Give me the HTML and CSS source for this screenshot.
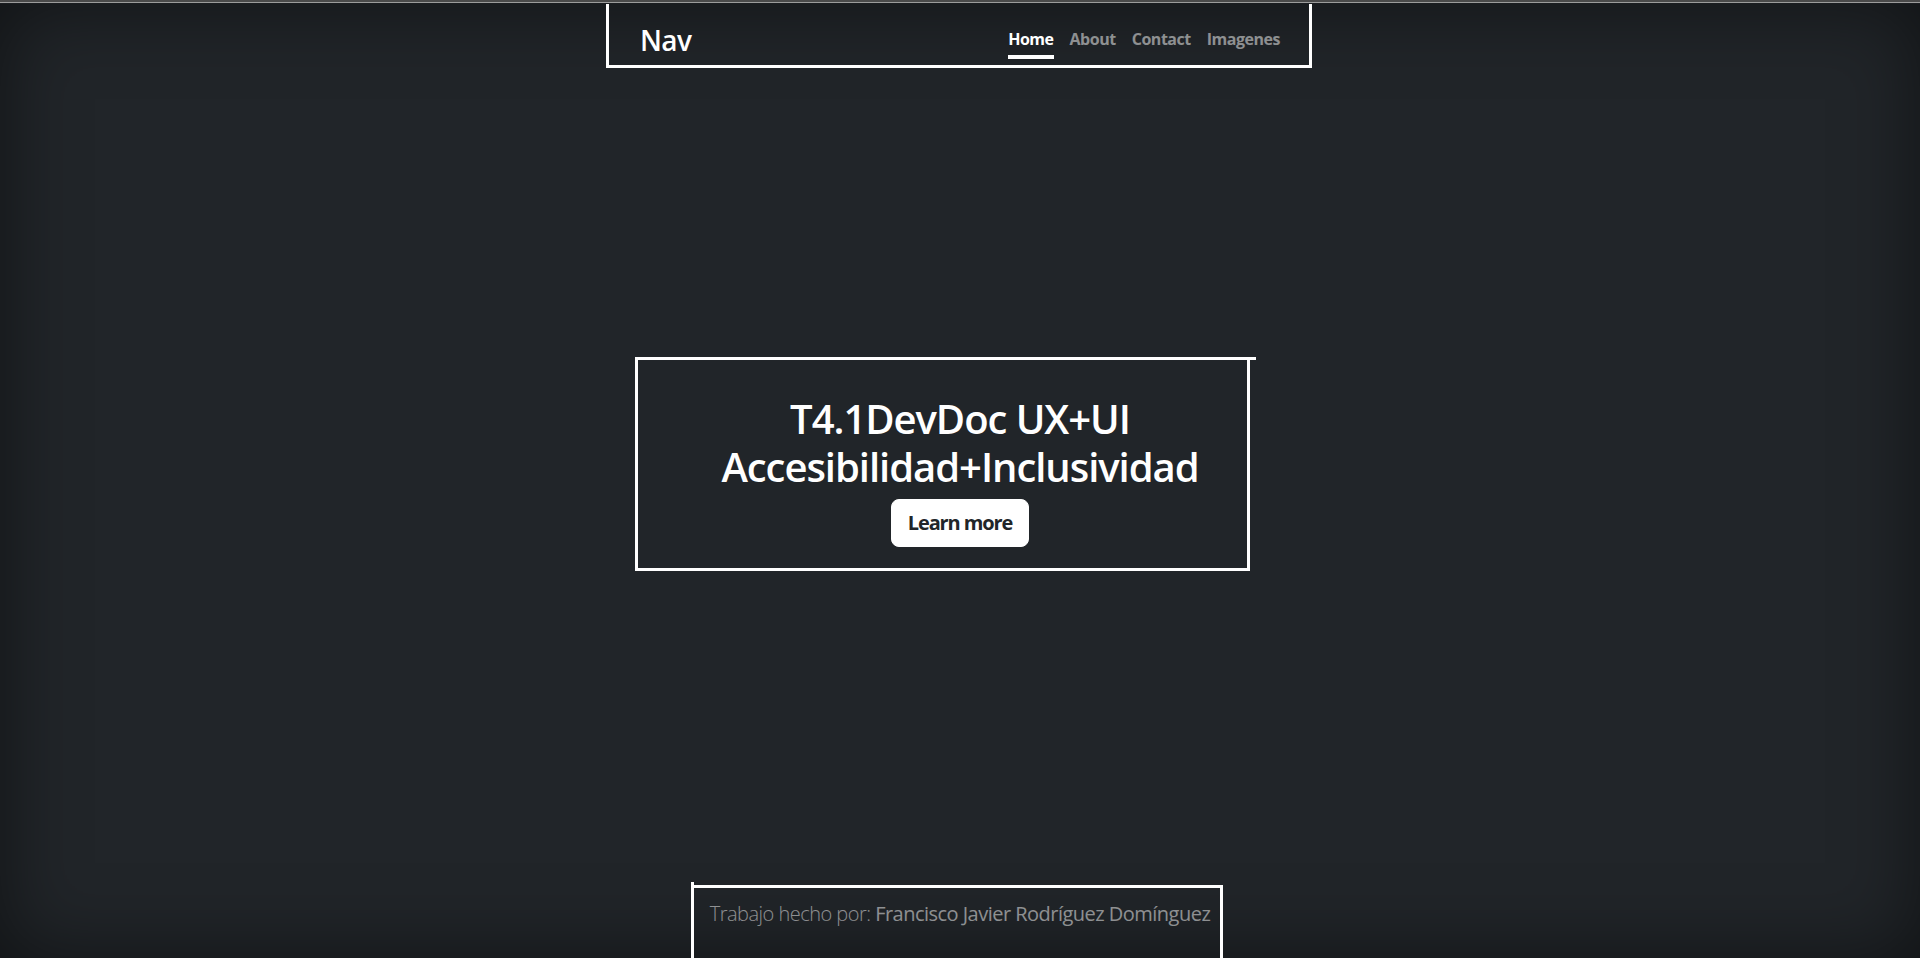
FILE: index.html
```html
<!DOCTYPE html>
<html lang="es">
<head>
<meta charset="utf-8">
<title>T4.1DevDoc UX+UI</title>
<link rel="stylesheet" href="styles.css">
</head>
<body>
  <div class="cover">
    <header class="masthead">
      <span class="mark mark-nav"></span>
      <h3 class="brand">Nav</h3>
      <nav class="nav">
        <a class="nav-link active" href="#">Home</a>
        <a class="nav-link" href="#">About</a>
        <a class="nav-link" href="#">Contact</a>
        <a class="nav-link" href="#">Imagenes</a>
      </nav>
    </header>

    <main class="hero">
      <span class="mark mark-hero"></span>
      <h1 class="hero-title">T4.1DevDoc UX+UI<br>Accesibilidad+Inclusividad</h1>
      <p class="lead"><a href="#" class="btn">Learn more</a></p>
    </main>

    <footer class="foot">
      <span class="mark mark-foot"></span>
      <p class="credit"><span class="credit-label">Trabajo hecho por:</span> <span class="credit-name">Francisco Javier Rodríguez Domínguez</span></p>
    </footer>
  </div>
</body>
</html>
```
FILE: styles.css
```css
html {
  margin: 0;
  height: 100%;
  background: linear-gradient(to bottom, #4a4a4a 0, #4a4a4a 2px, #9c9c9c 2px, #9c9c9c 3px, #1a1d20 3px, #1a1d20 4px, #ffffff 4px);
}

body {
  margin: 4px 0 0;
  height: calc(100vh - 8px);
  display: flex;
  background: #212529;
  box-shadow: inset 0 0 5rem rgba(0, 0, 0, 0.5);
  color: #fff;
  text-align: center;
  font-family: "Open Sans", "Noto Sans", "Liberation Sans", sans-serif;
  font-size: 16px;
  line-height: 1.5;
}

.cover {
  display: flex;
  flex-direction: column;
  width: 100%;
  max-width: 672px;
  height: 100%;
  margin: 0 auto;
  padding: 19px 16px 13px;
  box-sizing: border-box;
}

.mark {
  position: absolute;
  border: 3px solid #fff;
  pointer-events: none;
}

.masthead {
  position: relative;
  margin-bottom: auto;
  display: flex;
  justify-content: space-between;
  align-items: center;
}

.mark-nav {
  top: -19px;
  left: -34px;
  right: -32px;
  bottom: -9px;
  border-top: none;
}

.brand {
  margin: 0;
  font-size: 28px;
  font-weight: 600;
  line-height: 1.2;
  letter-spacing: -0.02em;
}

.nav {
  display: flex;
}

.nav-link {
  margin-left: 16px;
  padding: 4px 0;
  border-bottom: 4px solid transparent;
  color: rgba(255, 255, 255, 0.5);
  font-weight: 700;
  text-decoration: none;
  letter-spacing: -0.03em;
}

.nav-link.active {
  color: #fff;
  border-bottom-color: #fff;
}

.hero {
  position: relative;
  padding: 0 16px;
}

.mark-hero {
  top: -38px;
  left: -5px;
  right: 30px;
  bottom: -8px;
}

.mark-hero::before {
  content: "";
  position: absolute;
  top: -3px;
  right: -9px;
  width: 9px;
  height: 3px;
  background: #fff;
}

.hero-title {
  margin: 0 0 8px;
  font-size: 40px;
  font-weight: 600;
  line-height: 1.2;
  letter-spacing: -0.026em;
}

.lead {
  margin: 0 0 16px;
  font-size: 20px;
}

.btn {
  display: inline-block;
  padding: 8px 16px;
  border: 1px solid #fff;
  border-radius: 8px;
  background: #fff;
  color: #212529;
  font-weight: 700;
  line-height: 1.5;
  text-decoration: none;
  letter-spacing: -0.055em;
}

.foot {
  position: relative;
  margin-top: auto;
  color: rgba(255, 255, 255, 0.5);
}

.mark-foot {
  top: -14px;
  left: 51px;
  right: 57px;
  bottom: -24px;
  border-bottom: none;
}

.mark-foot::before {
  content: "";
  position: absolute;
  top: -6px;
  left: -3px;
  width: 3px;
  height: 3px;
  background: #fff;
}

.credit {
  margin: 0 0 16px;
  font-size: 20px;
  letter-spacing: -0.026em;
}

.credit-label {
  font-weight: 300;
}

.credit-name {
  font-weight: 400;
}
```
